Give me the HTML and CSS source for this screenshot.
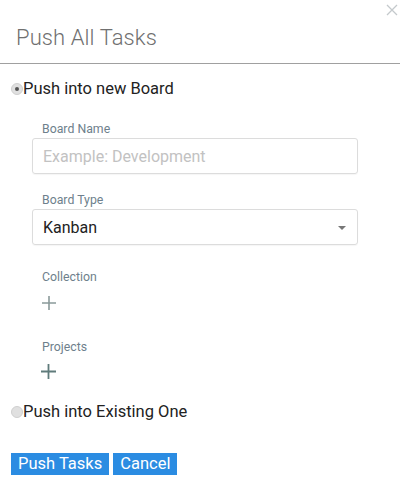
FILE: index.html
```html
<!DOCTYPE html>
<html>
<head>
<meta charset="utf-8">
<link rel="stylesheet" href="styles.css">
</head>
<body>
<div class="modal">
  <button class="close" aria-label="close">
    <svg width="12" height="12" viewBox="0 0 12 12"><path d="M1 1L11 11M11 1L1 11" stroke="#c4c9cc" stroke-width="1.3" fill="none"/></svg>
  </button>
  <div class="header"><h1 class="title">Push All Tasks</h1></div>
  <div class="body">
    <label class="radio-row"><span class="radio checked"></span>Push into new Board</label>
    <div class="fields">
      <div class="field name">
        <div class="flabel">Board Name</div>
        <div class="input placeholder">Example: Development</div>
      </div>
      <div class="field type">
        <div class="flabel">Board Type</div>
        <div class="input select">Kanban<span class="caret"></span></div>
      </div>
      <div class="field collection">
        <div class="flabel">Collection</div>
        <svg class="plus" width="14" height="14" viewBox="0 0 14 14"><path d="M7 0V14M0 7H14" stroke="#8a9a9a" stroke-width="1.6"/></svg>
      </div>
      <div class="field projects">
        <div class="flabel">Projects</div>
        <svg class="plus dark" width="15" height="15" viewBox="0 0 15 15"><path d="M7.5 0V15M0 7.5H15" stroke="#5f7b7b" stroke-width="1.8"/></svg>
      </div>
    </div>
    <label class="radio-row"><span class="radio"></span>Push into Existing One</label>
    <div class="buttons">
      <button class="btn">Push Tasks</button>
      <button class="btn">Cancel</button>
    </div>
  </div>
</div>
</body>
</html>
```
FILE: styles.css
```css
* { box-sizing: border-box; }
html, body { margin: 0; padding: 0; background: #fff; }
body { font-family: Roboto, "Liberation Sans", sans-serif; width: 400px; height: 482px; overflow: hidden; }
.modal { position: relative; }
.close { position: absolute; top: 4px; right: 2px; border: 0; background: none; padding: 0; width: 12px; height: 12px; }
.close svg { display: block; }
.header { border-bottom: 1px solid #a0a0a0; height: 64px; padding: 24px 0 0 16px; }
.title { margin: 0; font-weight: 300; font-size: 22px; line-height: 28px; color: #707070; letter-spacing: 0.1px; }
.body { padding: 14px 0 0 11px; }
.radio-row { display: flex; align-items: center; font-size: 16.5px; color: #222; line-height: 22px; }
.radio { width: 12px; height: 12px; border-radius: 50%; background: #e0e0e0; border: 1px solid #cfcfcf; margin-right: 0; position: relative; flex: none; }
.radio.checked::after { content: ""; position: absolute; left: 3px; top: 3px; width: 4px; height: 4px; border-radius: 50%; background: #555; }
.fields { padding: 22px 0 0 21px; }
.flabel { font-size: 12.3px; color: #6e7f8c; line-height: 14px; margin: 0 0 2px 10px; }
.input { width: 326px; height: 36px; border: 1px solid #dcdcdc; border-radius: 3px; box-shadow: 0 1px 1px rgba(0,0,0,0.04); padding-left: 10px; display: flex; align-items: center; font-size: 16px; color: #222; position: relative; }
.placeholder { color: #c2c2c2; font-size: 16px; }
.caret { position: absolute; right: 11px; top: 16px; width: 0; height: 0; border-left: 4px solid transparent; border-right: 4px solid transparent; border-top: 4px solid #777; }
.field.name { margin-bottom: 19px; }
.field.type { margin-bottom: 25px; }
.field.collection { margin-bottom: 30px; }
.field.projects { margin-bottom: 22px; }
.plus { display: block; margin: 12px 0 0 10px; }
.plus.dark { margin: 10px 0 0 9px; }
.buttons { display: flex; gap: 4px; margin-top: 30px; }
.btn { background: #2b8ce2; color: #fff; border: 0; border-radius: 0; font-family: Roboto, "Liberation Sans", sans-serif; font-size: 16.5px; height: 22px; line-height: 22px; padding: 0 7px; }
```
